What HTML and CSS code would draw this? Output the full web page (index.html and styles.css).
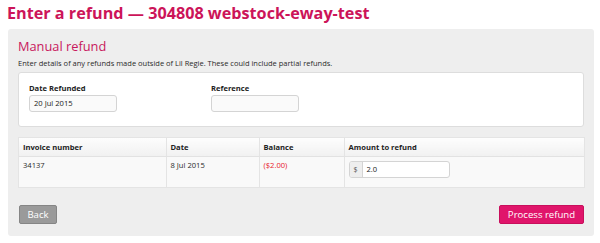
FILE: index.html
```html
<!DOCTYPE html>
<html>
<head>
<meta charset="utf-8">
<link rel="stylesheet" href="styles.css">
</head>
<body>
<h1 class="title">Enter a refund — 304808 webstock-eway-test</h1>
<div class="panel">
  <h2 class="panel-title">Manual refund</h2>
  <p class="desc">Enter details of any refunds made outside of Lil Regie. These could include partial refunds.</p>
  <div class="form-box">
    <div class="field">
      <label class="label">Date Refunded</label>
      <div class="input">20 Jul 2015</div>
    </div>
    <div class="field">
      <label class="label">Reference</label>
      <div class="input"></div>
    </div>
  </div>
  <table class="table">
    <thead>
      <tr>
        <th class="c1">Invoice number</th>
        <th class="c2">Date</th>
        <th class="c3">Balance</th>
        <th class="c4">Amount to refund</th>
      </tr>
    </thead>
    <tbody>
      <tr>
        <td>34137</td>
        <td>8 Jul 2015</td>
        <td class="neg">($2.00)</td>
        <td class="amt-cell">
          <div class="input-group"><span class="addon">$</span><span class="amount">2.0</span></div>
        </td>
      </tr>
    </tbody>
  </table>
  <div class="actions">
    <button class="btn btn-back">Back</button>
    <button class="btn btn-primary">Process refund</button>
  </div>
</div>
</body>
</html>
```
FILE: styles.css
```css
* { box-sizing: border-box; }
body {
  margin: 0;
  padding: 0 6px 0 8px;
  font-family: "Open Sans", "DejaVu Sans", sans-serif;
  background: #fff;
  color: #333;
}
.title {
  margin: 0 0 0 -1px;
  padding-top: 1px;
  height: 29px;
  font-size: 16.2px;
  font-weight: 700;
  color: #cc1459;
  line-height: 25px;
}
.panel {
  background: #eeeeee;
  border-radius: 3px;
  padding: 8px 10px 11px 10px;
  height: 207px;
}
.panel-title {
  margin: 0;
  font-size: 12.8px;
  font-weight: 500;
  color: #c8175d;
  line-height: 18px;
}
.desc {
  margin: 2px 0 0 0;
  font-size: 7.5px;
  line-height: 12px;
  color: #2a2a2a;
}
.form-box {
  margin-top: 3px;
  background: #fff;
  border: 1px solid #dddddd;
  border-radius: 3px;
  height: 55px;
  padding: 9px 10px 0 10px;
  display: flex;
}
.field { width: 182px; }
.label {
  display: block;
  font-size: 7.6px;
  font-weight: 700;
  color: #222;
  line-height: 12px;
  margin-bottom: 1px;
}
.input {
  width: 88px;
  height: 17px;
  border: 1px solid #d4d4d4;
  border-radius: 3px;
  background: #fafafa;
  font-size: 7.6px;
  line-height: 15px;
  padding-left: 4px;
  color: #222;
}
.table {
  margin: 11px 0 0 1px;
  width: 565px;
  border-collapse: collapse;
  background: #f9f9f9;
  box-shadow: 0 0 0 1px #e4e4e4;
  font-size: 7.6px;
}
.table th {
  height: 18px;
  text-align: left;
  font-weight: 700;
  color: #222;
  padding: 0 4px;
  background: linear-gradient(#fdfdfd, #f1f1f1);
  border-bottom: 1px solid #e2e2e2;
  border-left: 1px solid #e4e4e4;
}
.table td {
  height: 31px;
  vertical-align: top;
  padding: 3px 4px 0 4px;
  color: #2a2a2a;
  border-left: 1px solid #e4e4e4;
}
.table th:first-child, .table td:first-child { border-left: none; }
.c1 { width: 147px; }
.c2 { width: 93px; }
.c3 { width: 85px; }
.table td.neg { color: #e8192c; }
.table td.amt-cell { padding-top: 4px; }
.input-group {
  display: flex;
  width: 101px;
  height: 17px;
  border: 1px solid #d4d4d4;
  border-radius: 3px;
  background: #fff;
  overflow: hidden;
}
.addon {
  width: 13px;
  background: #eeeeee;
  border-right: 1px solid #d4d4d4;
  text-align: center;
  line-height: 15px;
  font-size: 7px;
  color: #555;
}
.amount {
  padding-left: 4px;
  line-height: 15px;
  color: #222;
}
.actions {
  margin-top: 18px;
  display: flex;
  justify-content: space-between;
  padding-left: 1px;
}
.btn {
  font-family: "Open Sans", "DejaVu Sans", sans-serif;
  height: 19px;
  border-radius: 2px;
  font-size: 9.6px;
  color: #fff;
  line-height: 17px;
  cursor: pointer;
}
.btn-back {
  width: 38px;
  padding: 0;
  background: #9a9a9a;
  border: 1px solid #858585;
}
.btn-primary {
  width: 85px;
  padding: 0;
  background: #e0156b;
  border: 1px solid #c80f5c;
}
```
